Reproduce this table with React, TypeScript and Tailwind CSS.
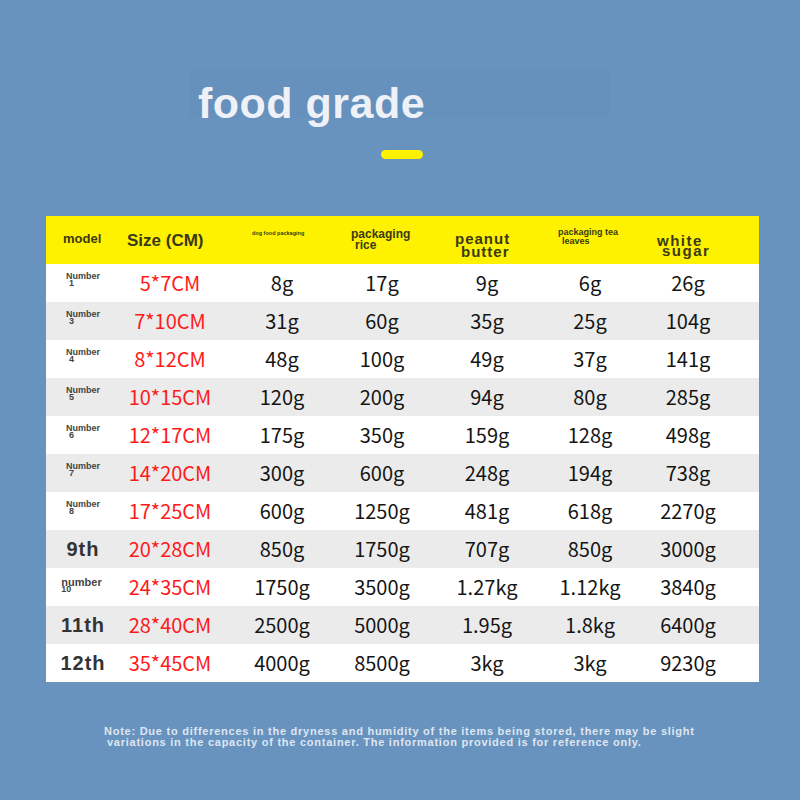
import React from "react";

type Row = { model: React.ReactNode; size: string; v: string[] };

const Num = ({ n }: { n: string }) => (
  <div className="flex flex-col items-start font-['Liberation_Sans',Arial,sans-serif] font-bold text-[#444] -mt-[6px]">
    <span className="text-[9px] leading-[7px]">Number</span>
    <span className="text-[9px] leading-[7px] pl-[3px]">{n}</span>
  </div>
);

const Big = ({ t }: { t: string }) => (
  <span className="font-['Liberation_Sans',Arial,sans-serif] font-bold text-[20px] tracking-[1px] text-[#333]">{t}</span>
);

const rows: Row[] = [
  { model: <Num n="1" />, size: "5*7CM", v: ["8g", "17g", "9g", "6g", "26g"] },
  { model: <Num n="3" />, size: "7*10CM", v: ["31g", "60g", "35g", "25g", "104g"] },
  { model: <Num n="4" />, size: "8*12CM", v: ["48g", "100g", "49g", "37g", "141g"] },
  { model: <Num n="5" />, size: "10*15CM", v: ["120g", "200g", "94g", "80g", "285g"] },
  { model: <Num n="6" />, size: "12*17CM", v: ["175g", "350g", "159g", "128g", "498g"] },
  { model: <Num n="7" />, size: "14*20CM", v: ["300g", "600g", "248g", "194g", "738g"] },
  { model: <Num n="8" />, size: "17*25CM", v: ["600g", "1250g", "481g", "618g", "2270g"] },
  { model: <Big t="9th" />, size: "20*28CM", v: ["850g", "1750g", "707g", "850g", "3000g"] },
  {
    model: (
      <div className="flex flex-col items-start font-['Liberation_Sans',Arial,sans-serif] font-bold text-[#444] -mt-[2px] -ml-[3px]">
        <span className="text-[11px] leading-[7px]">number</span>
        <span className="text-[9px] leading-[7px]">10</span>
      </div>
    ),
    size: "24*35CM",
    v: ["1750g", "3500g", "1.27kg", "1.12kg", "3840g"],
  },
  { model: <Big t="11th" />, size: "28*40CM", v: ["2500g", "5000g", "1.95g", "1.8kg", "6400g"] },
  { model: <Big t="12th" />, size: "35*45CM", v: ["4000g", "8500g", "3kg", "3kg", "9230g"] },
];

const grid = "grid grid-cols-[74px_100px_124px_76px_134px_72px_124px] pr-[9px]";
const hdr = "font-['Liberation_Sans',Arial,sans-serif] font-bold text-[#3a3a14]";

export default function App() {
  return (
    <div className="w-[800px] h-[800px] bg-[#6893bf] flex flex-col overflow-hidden">
      <div className="mt-[67px] mx-auto w-[420px] h-[51px] bg-[#6691bd] pl-[8px] pt-[15px]">
        <div className="font-['Liberation_Sans',Arial,sans-serif] font-bold text-[43px] leading-[43px] tracking-[0.5px] text-[#eef1f7]">
          food grade
        </div>
      </div>
      <div className="mt-[32px] ml-[381px] w-[42px] h-[9px] rounded-full bg-[#fff200]" />
      <div className="mt-[57px] ml-[46px] w-[713px] bg-white">
        <div className={`${grid} h-[48px] bg-[#fff200]`}>
          <div className={`${hdr} text-[13px] leading-[13px] pt-[16px] pl-[17px]`}>model</div>
          <div className={`${hdr} text-[17px] leading-[17px] pt-[16px] pl-[7px]`}>Size (CM)</div>
          <div className={`${hdr} text-[5.5px] leading-[6px] pt-[14px] pl-[32px]`}>dog food packaging</div>
          <div className={`${hdr} text-[12px] leading-[11px] pt-[13px] pl-[7px] flex flex-col`}>
            <span>packaging</span>
            <span className="pl-[4px]">rice</span>
          </div>
          <div className={`${hdr} text-[15px] leading-[13px] tracking-[1px] pt-[16px] pl-[35px] flex flex-col`}>
            <span>peanut</span>
            <span className="pl-[6px]">butter</span>
          </div>
          <div className={`${hdr} text-[9px] leading-[8.5px] pt-[12px] pl-[4px] flex flex-col`}>
            <span className="whitespace-nowrap">packaging tea</span>
            <span className="pl-[4px]">leaves</span>
          </div>
          <div className={`${hdr} text-[15px] leading-[10px] tracking-[1.5px] pt-[20px] pl-[31px] flex flex-col`}>
            <span>white</span>
            <span className="pl-[5px]">sugar</span>
          </div>
        </div>
        {rows.map((r, i) => (
          <div key={i} className={`${grid} h-[38px] ${i % 2 === 1 ? "bg-[#ebebeb]" : "bg-white"}`}>
            <div className="flex items-center justify-center">{r.model}</div>
            <div className="flex items-center justify-center font-['Noto_Sans_CJK_SC','Noto_Sans',sans-serif] text-[20px] text-[#ff1a1a]">
              {r.size}
            </div>
            {r.v.map((x, j) => (
              <div
                key={j}
                className="flex items-center justify-center font-['Noto_Sans_CJK_SC','Noto_Sans',sans-serif] text-[20px] text-[#151515]"
              >
                {x}
              </div>
            ))}
          </div>
        ))}
      </div>
      <div className="mt-[44px] ml-[104px] font-['Liberation_Sans',Arial,sans-serif] font-bold text-[11px] leading-[11px] tracking-[0.75px] text-[#dfe6f0] whitespace-nowrap">
        <div>Note: Due to differences in the dryness and humidity of the items being stored, there may be slight</div>
        <div className="pl-[3px]">variations in the capacity of the container. The information provided is for reference only.</div>
      </div>
    </div>
  );
}
